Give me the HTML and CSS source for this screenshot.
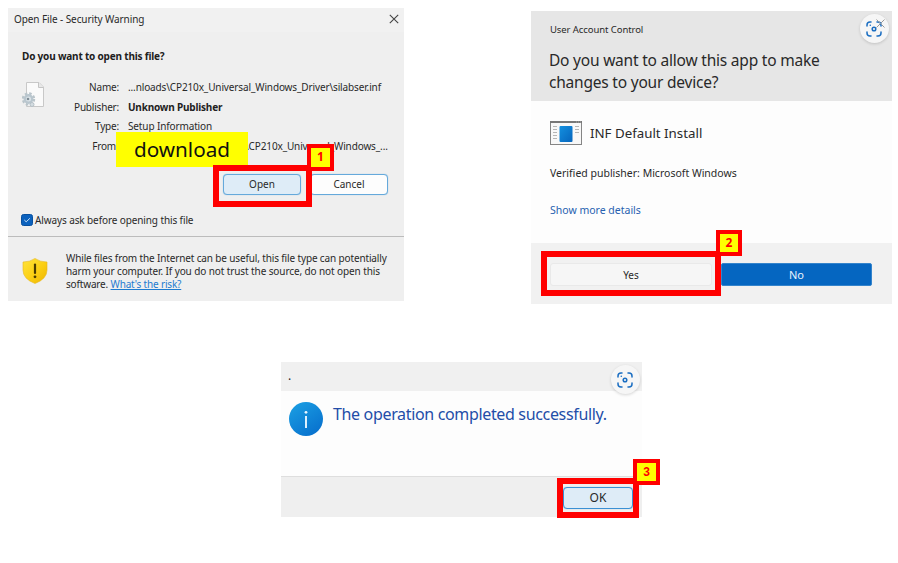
FILE: index.html
```html
<!DOCTYPE html>
<html lang="en">
<head>
<meta charset="utf-8">
<title>Driver installation steps</title>
<link rel="stylesheet" href="styles.css">
</head>
<body>
<svg class="defs" width="0" height="0">
  <symbol id="scan" viewBox="0 0 16 16">
    <g fill="none" stroke="#1b6ec2" stroke-width="1.5" stroke-linecap="round">
      <path d="M1 5V4Q1 1 4 1H5M11 1H12Q15 1 15 4V5M15 11V12Q15 15 12 15H11M5 15H4Q1 15 1 12V11"/>
      <circle cx="8" cy="8" r="1.8"/>
    </g>
    <circle cx="4.3" cy="4.3" r=".8" fill="#1b6ec2"/>
  </symbol>
</svg>
<main class="page">
  <div class="top">
    <section class="dialog security">
      <header class="sec-title"><span>Open File - Security Warning</span>
        <svg width="10" height="10" viewBox="0 0 10 10"><path d="M.8.8l8.4 8.4M9.2.8L.8 9.2" stroke="#444" stroke-width="1.1"/></svg>
      </header>
      <h1 class="question"><span>Do you want to open this file?</span></h1>
      <div class="file">
        <svg class="file-icon" width="24" height="28" viewBox="0 0 24 28">
          <path d="M4.500 1.500H17L21.500 6V25.500H4.500Z" fill="#fafafa" stroke="#c8c8c8"/>
          <path d="M16.500 1.500V6.500H21.500" fill="#e8e8e8" stroke="#c4c4c4"/>
          <circle cx="6.500" cy="18" r="5.600" fill="none" stroke="#b9c4ca" stroke-width="2.200" stroke-dasharray="2.500 1.900"/>
          <circle cx="6.500" cy="18" r="3.700" fill="#dce4e9" stroke="#b9c6ce" stroke-width="2.400"/>
          <circle cx="6" cy="18" r="1.300" fill="#7f8d96"/>
          <circle cx="10" cy="23.500" r="2" fill="#d5dde2" stroke="#b5c0c7"/>
        </svg>
        <dl class="facts">
          <dt>Name:</dt><dd class="name">...nloads\CP210x_Universal_Windows_Driver\silabser.inf</dd>
          <dt>Publisher:</dt><dd class="publisher">Unknown Publisher</dd>
          <dt>Type:</dt><dd class="type">Setup Information</dd>
          <dt class="from-label">From</dt><dd class="from">\CP210x_Universal_Windows_...</dd>
        </dl>
      </div>
      <div class="sec-actions"><div class="btn primary">Open</div><div class="btn">Cancel</div></div>
      <div class="ask">
        <svg width="12" height="12" viewBox="0 0 12 12"><rect x=".5" y=".5" width="11" height="11" rx="2" fill="#0b61bd" stroke="#07509f"/><path d="M3.300 6l1.900 1.800L8.900 4.300" fill="none" stroke="#c8e1f7"/></svg>
        <span>Always ask before opening this file</span>
      </div>
      <footer class="risk">
        <svg width="26" height="26" viewBox="0 0 26 26">
          <defs><linearGradient id="gold" x1="0" y1="0" x2="1" y2="1"><stop offset="0" stop-color="#ffe33b"/><stop offset=".5" stop-color="#fcd116"/><stop offset="1" stop-color="#eeb500"/></linearGradient></defs>
          <path d="M13 .5Q18 4 25 4V12Q25 21 13 25.500Q1 21 1 12V4Q8 4 13 .5Z" fill="url(#gold)" stroke="#e8b719" stroke-width=".6"/>
          <path d="M13 6.500V15" stroke="#4b3b00" stroke-width="2.200" stroke-linecap="round"/><circle cx="13" cy="18.800" r="1.400" fill="#4b3b00"/>
        </svg>
        <p><span class="r1">While files from the Internet can be useful, this file type can potentially</span><br><span class="r2">harm your computer. If you do not trust the source, do not open this</span><br><span class="r3">software. <a>What's the risk?</a></span></p>
      </footer>
      <div class="mask">download</div>
      <div class="frame frame-1"></div><div class="step step-1">1</div>
    </section>

    <section class="dialog uac">
      <header class="uac-head">
        <div class="uac-label"><span>User Account Control</span></div>
        <h2><span class="u1">Do you want to allow this app to make</span><br><span class="u2">changes to your device?</span></h2>
      </header>
      <div class="uac-body">
        <div class="app">
          <svg width="32" height="24" viewBox="0 0 32 24">
            <defs><linearGradient id="blue" x1="0" y1="0" x2="1" y2="1"><stop offset="0" stop-color="#1490df"/><stop offset="1" stop-color="#0665bd"/></linearGradient></defs>
            <rect x=".5" y=".5" width="31" height="23" fill="#f8f8f8" stroke="#858585"/>
            <path d="M0 1H32" stroke="#777" stroke-width="2"/><path d="M26 1h1M28 1h1M30 1h1" stroke="#aaa"/>
            <path d="M3 5.500h4M3 8.500h4M3 11.500h4M3 14.500h4M3 17.500h4M25 5.500h4M25 8.500h4M25 11.500h4" stroke="#b5b5b5"/>
            <rect x="9.500" y="5" width="13" height="16" rx="1" fill="url(#blue)"/>
          </svg>
          <span>INF Default Install</span>
        </div>
        <div class="verified"><span>Verified publisher: Microsoft Windows</span></div>
        <div class="details"><span>Show more details</span></div>
      </div>
      <footer class="uac-actions"><div class="yes">Yes</div><div class="no">No</div></footer>
      <div class="lens lens-2"><svg class="close" width="9" height="9" viewBox="0 0 9 9"><path d="M.5.5l8 8M8.500.5l-8 8" stroke="#999"/></svg><svg width="16" height="16"><use href="#scan"/></svg></div>
      <div class="frame frame-2"></div><div class="step step-2">2</div>
    </section>
  </div>

  <section class="dialog done">
    <header class="done-title">.</header>
    <div class="done-body">
      <svg width="34" height="34" viewBox="0 0 34 34">
        <defs><linearGradient id="info" x1="0" y1="0" x2=".7" y2="1"><stop offset="0" stop-color="#1ca1e4"/><stop offset="1" stop-color="#0872ce"/></linearGradient></defs>
        <circle cx="17" cy="17" r="17" fill="url(#info)"/><circle cx="17" cy="10.300" r="1.400" fill="#e9f6ff"/><path d="M17 14V26" stroke="#e9f6ff" stroke-width="1.900"/>
      </svg>
      <span>The operation completed successfully.</span>
    </div>
    <footer class="done-actions"><div class="btn primary ok">OK</div></footer>
    <div class="lens lens-3"><svg width="16" height="16"><use href="#scan"/></svg></div>
    <div class="frame frame-3"></div><div class="step step-3">3</div>
  </section>
</main>
</body>
</html>
```
FILE: styles.css
```css
* { box-sizing: border-box; }
body { margin: 0; background: #fff; color: #292929; font: 10px/14px "Noto Sans", "Open Sans", sans-serif; }
.defs { position: absolute; }
.page { width: 898px; height: 563px; padding: 8px 6px 0 8px; overflow: hidden; }
.top { display: flex; justify-content: space-between; height: 354px; }
.dialog { position: relative; white-space: nowrap; }
h1, h2, p, dl, dd { margin: 0; }
svg { display: block; flex: none; }

.security { width: 396px; height: 293px; background: #efefef; letter-spacing: -.13px; }
.sec-title { display: flex; justify-content: space-between; align-items: center; height: 24px; padding: 0 5px 2px 6px; background: #f1f1f1; letter-spacing: -.09px; }
.question { height: 46px; padding: 17px 14px 0; font-size: 10px; line-height: 14px; letter-spacing: -.19px; color: #202020; }
.file { display: flex; height: 92px; padding: 2px 0 0 14px; }
.file-icon { margin-top: 1px; }
.facts { display: grid; grid-template-columns: 73px 1fr; grid-template-rows: 20px 19px 20px 20px; column-gap: 9px; }
.facts dt { text-align: right; letter-spacing: -.2px; }
.facts .publisher { font-weight: 700; color: #222; letter-spacing: -.19px; }
.facts .type { letter-spacing: -.13px; }
.facts .from-label { padding-right: 3px; }
.facts .from { padding-left: 117px; }
.sec-actions { display: flex; gap: 9px; justify-content: flex-end; height: 44px; padding: 4px 16px 0 0; }
.btn { width: 78px; height: 21px; border: 1px solid #65a9db; border-radius: 4px; background: #fdfdfd; text-align: center; line-height: 19px; letter-spacing: 0; box-shadow: 0 0 1px #80b8df; }
.primary { background: #deecf7; }
.ask { display: flex; align-items: center; gap: 2px; height: 22px; padding: 0 0 10px 13px; }
.ask span { line-height: 14px; letter-spacing: -.11px; }
.risk { display: flex; gap: 18px; height: 65px; padding: 15px 0 0 14px; border-top: 1px solid #bcbcbc; }
.risk svg { margin-top: 6px; }
.risk p { line-height: 13px; letter-spacing: -.14px; }
.r2 { letter-spacing: -.1px; }
.r3 { letter-spacing: -.17px; }
.risk a { color: #1e7bd0; text-decoration: underline; }
.mask { position: absolute; left: 108px; top: 124px; width: 132px; height: 35px; background: #ff0; color: #111; font-size: 20.7px; line-height: 34px; text-align: center; letter-spacing: 0; }

.frame { position: absolute; border: 6px solid #f00; }
.step { position: absolute; width: 27px; height: 27px; border: 4px solid #f00; background: #ff0; color: #f00; font: 700 12px/18px "Open Sans", sans-serif; text-align: center; letter-spacing: 0; }
.frame-1 { left: 205px; top: 157px; width: 99px; height: 42px; }
.step-1 { left: 299px; top: 136px; }

.uac { width: 361px; height: 293px; margin-top: 3px; background: #fdfdfd; }
.uac-head { height: 90px; padding: 12px 18px 0; background: #e6e6e6; }
.uac-label { height: 27px; padding-left: 1px; font-size: 9.5px; letter-spacing: -.08px; }
h2 { font-size: 15.5px; font-weight: 400; line-height: 21.5px; letter-spacing: -.21px; }
.uac-body { height: 142px; padding: 20px 19px 0; }
.app { display: flex; gap: 8px; align-items: center; height: 24px; font-size: 13.3px; }
.verified { padding-top: 21px; font-size: 10.5px; }
.details { padding-top: 23px; font-size: 10.5px; color: #2761b0; }
.uac-actions { display: flex; gap: 9px; height: 61px; padding: 20px 20px 0 19px; background: #f1f1f1; text-align: center; line-height: 22px; }
.yes { width: 162px; height: 23px; border: 1px solid #e9e9e9; border-radius: 3px; background: #f6f6f6; }
.no { flex: 1; height: 23px; border: 1px solid #3484cc; border-radius: 2px; background: #0566c1; color: #e8f3fd; font-size: 11px; }
.frame-2 { left: 10px; top: 240px; width: 180px; height: 45px; }
.step-2 { left: 185px; top: 219px; width: 26px; height: 26px; }
.lens { position: absolute; display: grid; place-items: center; width: 29px; height: 29px; border-radius: 50%; background: #f6f6f6; box-shadow: 0 1px 3px rgba(0,0,0,.16); }
.lens-2 { left: 329px; top: 3px; }
.lens svg { margin-right: 1px; }
.lens .close { position: absolute; right: 4px; top: 5px; margin: 0; }

.done { width: 361px; height: 155px; margin-left: 273px; background: #fdfdfd; }
.done-title { height: 29px; padding: 7px 7px 0; background: #f0f0f0; font-size: 12px; }
.done-body { display: flex; gap: 10px; height: 86px; padding: 11px 8px 0; border-bottom: 1px solid #dedede; color: #234da8; font-size: 16px; line-height: 24px; letter-spacing: -.34px; }
.done-actions { display: flex; justify-content: flex-end; height: 40px; padding: 10px 9px 0; background: #efefef; }
.ok { width: 70px; height: 22px; border-color: #3a90d4; font-size: 12px; line-height: 20px; }
.frame-3 { left: 276px; top: 116px; width: 82px; height: 40px; }
.step-3 { left: 352px; top: 97px; height: 26px; font-family: "Liberation Sans", sans-serif; }
.lens-3 { left: 330px; top: 3px; }
```
